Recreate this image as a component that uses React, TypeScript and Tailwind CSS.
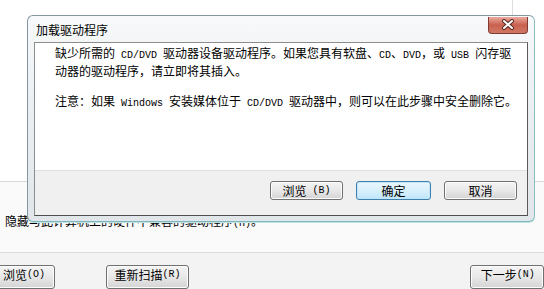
import type { ReactNode } from 'react'

const cjk = "font-['SimSun','Noto_Sans_CJK_SC',sans-serif]"

// half-width text, SimSun style: 6px per character
function M({ children }: { children: ReactNode }) {
  return (
    <span className="font-['Liberation_Mono',monospace] text-[10px] whitespace-pre">{children}</span>
  )
}

function WinButton({
  children,
  className = '',
  primary = false,
}: {
  children: ReactNode
  className?: string
  primary?: boolean
}) {
  return (
    <div
      className={`flex items-center justify-center rounded-[3px] border text-[12px] leading-none text-black ${
        primary
          ? 'border-[#3c7fb1] bg-gradient-to-b from-[#eaf6fd] via-[#d9f0fc] to-[#bee6fd] shadow-[inset_0_0_0_1px_#c6e6f7]'
          : 'border-[#707070] bg-gradient-to-b from-[#f4f4f4] via-[#e8e8e8] to-[#d4d4d4] shadow-[inset_0_0_0_1px_#fcfcfc]'
      } ${className}`}
    >
      {children}
    </div>
  )
}

function CloseGlyph() {
  return (
    <svg width="14" height="11" viewBox="0 0 14 11">
      <path d="M3 2 L11 9 M11 2 L3 9" stroke="#5a2a22" strokeWidth="4" strokeLinecap="round" />
      <path d="M3 2 L11 9 M11 2 L3 9" stroke="#ffffff" strokeWidth="2" strokeLinecap="round" />
    </svg>
  )
}

export default function App() {
  return (
    <div className={`relative w-[544px] h-[289px] overflow-hidden bg-white text-black ${cjk}`}>
      {/* Background wizard page */}
      <div className="flex flex-col h-full">
        <div className="h-[187px] border-b border-[#d9d9d9] bg-white">
          <div className="w-[513px] h-[15px] border-r border-[#dedede]" />
        </div>
        <div className="h-[71px] bg-[#fafafa] pl-[5px] pt-[31px] text-[12px] leading-[15px]">
          隐藏与此计算机上的硬件不兼容的驱动程序<M>(H)</M>。
        </div>
        <div className="flex-1 border-t border-[#dcdcdc] bg-[#f3f3f3] pt-[12px]">
          <div className="flex items-start">
            <WinButton className="w-[72px] h-[24px] ml-[-12px] justify-start pl-[14px] pb-[4px]">
              浏览<M>(O)</M>
            </WinButton>
            <WinButton className="w-[90px] h-[24px] ml-[51px] pb-[4px]">
              重新扫描<M>(R)</M>
            </WinButton>
            <WinButton className="w-[80px] h-[24px] ml-[281px] justify-start pl-[10px] pb-[4px]">
              下一步<M>(N)</M>
            </WinButton>
          </div>
        </div>
      </div>

      {/* Load driver dialog */}
      <div className="absolute left-[27px] top-[15px] w-[508px] h-[207px] rounded-[6px] border border-[#8497a1] border-b-[#7fb6bd] border-r-[#8cbcc2] bg-gradient-to-b from-[#f7f9fa] via-[#eaeef1] to-[#e1e6ea] shadow-[0_1px_0_#bfe3e3]">
        <div className="flex h-[26px] items-center justify-between pl-[8px]">
          <span className="text-[12px] pt-[2px]">加载驱动程序</span>
          <div className="mr-[6px] mt-[-8px] flex h-[17px] w-[40px] items-center justify-center rounded-b-[4px] border border-t-0 border-[#7e3b31] bg-gradient-to-b from-[#e9aa9c] via-[#c9604f] to-[#d27866]">
            <CloseGlyph />
          </div>
        </div>
        <div className="mx-[6px] flex h-[174px] flex-col border border-[#8d8d8d] border-b-[#4e4e4e] border-r-[#5a5a5a] bg-white">
          <div className="flex-1 pl-[20px] pt-[2px] text-[12px] leading-[15px]">
            <p>
              缺少所需的<M> CD/DVD </M>驱动器设备驱动程序。如果您具有软盘、<M>CD</M>、<M>DVD</M>，或<M> USB </M>闪存驱
            </p>
            <p>动器的驱动程序，请立即将其插入。</p>
            <p className="mt-[15px]">
              注意：如果<M> Windows </M>安装媒体位于<M> CD/DVD </M>驱动器中，则可以在此步骤中安全删除它。
            </p>
          </div>
          <div className="h-[45px] border-t border-[#dfdfdf] bg-[#f0f0f0] flex items-start justify-end gap-[13px] pr-[10px] pt-[10px]">
            <WinButton className="w-[73px] h-[19px]">
              浏览<M> (B)</M>
            </WinButton>
            <WinButton primary className="w-[75px] h-[19px]">
              确定
            </WinButton>
            <WinButton className="w-[73px] h-[19px]">取消</WinButton>
          </div>
        </div>
      </div>
    </div>
  )
}
